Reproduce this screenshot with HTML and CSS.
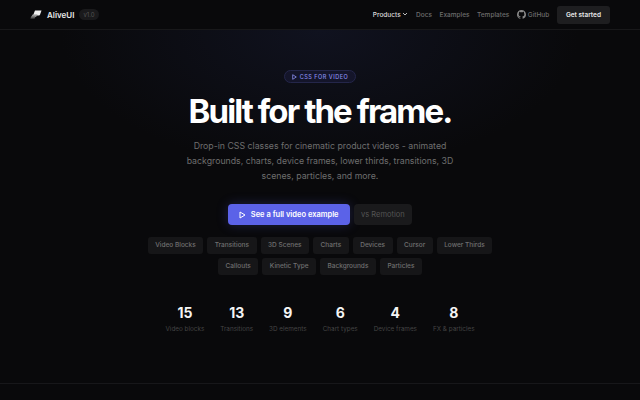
FILE: index.html
```html
<!DOCTYPE html>
<html lang="en">
<head>
  <meta charset="UTF-8" />
  <title>AliveUI</title>
  <link rel="stylesheet" href="styles.css">
</head>
<body>

<nav class="nav">
  <div class="brand">
    <svg class="logo" width="12" height="9" viewBox="0 0 12 9">
      <path d="M5 0.6 H11.5 L10 4.8 Q9.7 5.4 9 5.4 H3 Z" fill="#efefef"/>
      <path d="M2.6 4.4 H7.5 L6 7 H1.2 Z" fill="#9a9a9a"/>
      <path d="M1.2 6.4 H5.6 L4.6 8.6 H0.4 Z" fill="#5c5c5c"/>
    </svg>
    <span class="brand-name">AliveUI</span>
    <span class="version">v1.0</span>
  </div>
  <div class="nav-links">
    <a class="nav-link active">Products
      <svg width="6" height="6" viewBox="0 0 6 6"><path d="M1 2 L3 4 L5 2" fill="none" stroke="#bbb" stroke-width="1"/></svg>
    </a>
    <a class="nav-link">Docs</a>
    <a class="nav-link">Examples</a>
    <a class="nav-link">Templates</a>
    <a class="nav-link github">
      <svg width="9" height="9" viewBox="0 0 16 16"><path fill="#8a8a8a" d="M8 0C3.58 0 0 3.58 0 8c0 3.54 2.29 6.53 5.47 7.59.4.07.55-.17.55-.38 0-.19-.01-.82-.01-1.49-2.01.37-2.53-.49-2.69-.94-.09-.23-.48-.94-.82-1.13-.28-.15-.68-.52-.01-.53.63-.01 1.08.58 1.23.82.72 1.21 1.87.87 2.33.66.07-.52.28-.87.51-1.07-1.78-.2-3.64-.89-3.64-3.95 0-.87.31-1.59.82-2.15-.08-.2-.36-1.02.08-2.12 0 0 .67-.21 2.2.82.64-.18 1.32-.27 2-.27s1.36.09 2 .27c1.53-1.04 2.2-.82 2.2-.82.44 1.1.16 1.92.08 2.12.51.56.82 1.27.82 2.15 0 3.07-1.87 3.75-3.65 3.95.29.25.54.73.54 1.48 0 1.07-.01 1.93-.01 2.2 0 .21.15.46.55.38A8.01 8.01 0 0 0 16 8c0-4.42-3.58-8-8-8z"/></svg>
      GitHub
    </a>
    <a class="nav-cta">Get started</a>
  </div>
</nav>

<main class="hero">
  <div class="eyebrow">
    <svg width="5" height="6" viewBox="0 0 5 6"><path d="M0.7 0.7 L4.3 3 L0.7 5.3 Z" fill="none" stroke="#8b8ff0" stroke-width="0.8"/></svg>
    CSS FOR VIDEO
  </div>
  <h1>Built for the frame.</h1>
  <p class="lead">Drop-in CSS classes for cinematic product videos - animated backgrounds, charts, device frames, lower thirds, transitions, 3D scenes, particles, and more.</p>

  <div class="actions">
    <a class="btn-primary">
      <svg width="7" height="8" viewBox="0 0 7 8"><path d="M1 1 L6 4 L1 7 Z" fill="none" stroke="#fff" stroke-width="1"/></svg>
      See a full video example
    </a>
    <a class="btn-ghost">vs Remotion</a>
  </div>

  <div class="tags">
    <span class="tag">Video Blocks</span>
    <span class="tag">Transitions</span>
    <span class="tag">3D Scenes</span>
    <span class="tag">Charts</span>
    <span class="tag">Devices</span>
    <span class="tag">Cursor</span>
    <span class="tag">Lower Thirds</span>
    <span class="tag">Callouts</span>
    <span class="tag">Kinetic Type</span>
    <span class="tag">Backgrounds</span>
    <span class="tag">Particles</span>
  </div>

  <div class="stats">
    <div class="stat"><strong>15</strong><span>Video blocks</span></div>
    <div class="stat"><strong>13</strong><span>Transitions</span></div>
    <div class="stat"><strong>9</strong><span>3D elements</span></div>
    <div class="stat"><strong>6</strong><span>Chart types</span></div>
    <div class="stat"><strong>4</strong><span>Device frames</span></div>
    <div class="stat"><strong>8</strong><span>FX &amp; particles</span></div>
  </div>
</main>

<div class="rule"></div>

</body>
</html>
```

FILE: styles.css
```css
html, body {
  margin: 0;
  height: 400px;
  overflow: hidden;
}
body {
  font-family: Inter, sans-serif;
  background: #09090b;
  color: #fff;
}
.nav {
  height: 30px;
  box-sizing: border-box;
  padding: 0 30px;
  display: flex;
  align-items: center;
  justify-content: space-between;
  border-bottom: 1px solid #18181a;
}
.brand {
  display: flex;
  align-items: center;
}
.logo {
  margin-right: 5px;
}
.brand-name {
  font-size: 8px;
  font-weight: 600;
  color: #e8e8e8;
}
.version {
  margin-left: 5px;
  padding: 2px 4px;
  font-size: 6px;
  color: #555;
  background: #1a1a1c;
  border-radius: 6px;
}
.nav-links {
  display: flex;
  align-items: center;
  gap: 7.6px;
  font-size: 6.5px;
  font-weight: 500;
  color: #6e6e6e;
}
.nav-link.active {
  color: #ddd;
}
.github {
  display: flex;
  align-items: center;
  gap: 2px;
}
.nav-cta {
  padding: 5px 9px;
  font-size: 6.5px;
  font-weight: 600;
  color: #e8e8e8;
  background: #1e1e20;
  border-radius: 3px;
}
.hero {
  height: 353px;
  display: flex;
  flex-direction: column;
  align-items: center;
  padding-top: 40px;
  box-sizing: border-box;
  background: radial-gradient(ellipse 260px 140px at 50% 0, #10121f 0%, rgba(9, 9, 11, 0) 100%);
}
.eyebrow {
  display: flex;
  align-items: center;
  gap: 3px;
  padding: 2px 7px;
  height: 13px;
  box-sizing: border-box;
  font-size: 5.5px;
  font-weight: 500;
  letter-spacing: 0.5px;
  color: #8b8ff0;
  background: #14152a;
  border: 1px solid #24264a;
  border-radius: 7px;
}
h1 {
  margin: 7px 0 0;
  font-size: 33px;
  line-height: 42px;
  font-weight: 700;
  letter-spacing: -1.9px;
  color: #fff;
}
.lead {
  margin: 7px 0 0;
  width: 275px;
  font-size: 8.75px;
  line-height: 15px;
  text-align: center;
  color: #6e6e6e;
}
.actions {
  display: flex;
  align-items: center;
  gap: 4px;
  margin-top: 20px;
}
.btn-primary {
  display: flex;
  align-items: center;
  gap: 5px;
  height: 21px;
  padding: 0 11px;
  font-size: 7.5px;
  font-weight: 600;
  color: #fff;
  background: #5b62e8;
  border-radius: 4px;
  box-shadow: 0 0 12px rgba(91, 98, 232, 0.25);
}
.btn-ghost {
  display: flex;
  align-items: center;
  height: 21px;
  padding: 0 7.5px;
  font-size: 7.5px;
  color: #555;
  background: #1a1a1c;
  border-radius: 4px;
}
.tags {
  display: flex;
  flex-wrap: wrap;
  justify-content: center;
  gap: 4px;
  width: 360px;
  margin-top: 12px;
}
.tag {
  padding: 0 7.5px;
  height: 17px;
  line-height: 17px;
  font-size: 6.5px;
  font-weight: 500;
  color: #707070;
  background: #161618;
  border-radius: 3px;
}
.stats {
  display: flex;
  justify-content: center;
  gap: 16px;
  margin-top: 29px;
}
.stat {
  display: flex;
  flex-direction: column;
  align-items: center;
}
.stat strong {
  font-size: 14px;
  line-height: 17px;
  font-weight: 700;
  color: #f5f5f5;
}
.stat span {
  margin-top: 4px;
  font-size: 6.35px;
  color: #444;
}
.rule {
  border-top: 1px solid #17171a;
}
```
